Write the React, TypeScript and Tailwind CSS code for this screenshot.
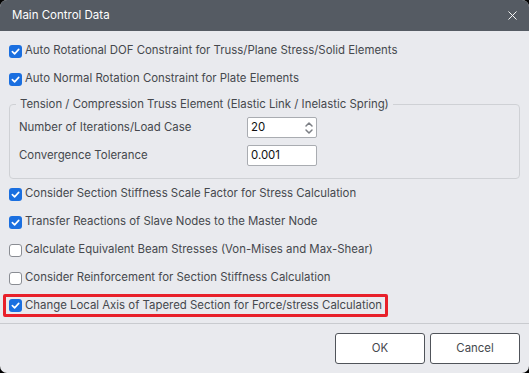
import { X } from 'lucide-react'

function Check({ checked }: { checked: boolean }) {
  if (checked) {
    return (
      <span className="w-[13px] h-[13px] rounded-[3px] bg-[#1a6fe0] flex items-center justify-center shrink-0">
        <svg width="9" height="9" viewBox="0 0 10 10" fill="none">
          <path d="M1.5 5.2 L4 7.6 L8.6 2.6" stroke="white" strokeWidth="1.8" strokeLinecap="round" strokeLinejoin="round" />
        </svg>
      </span>
    )
  }
  return <span className="w-[13px] h-[13px] rounded-[3px] bg-white border border-[#8a8d93] shrink-0" />
}

function CheckRow({ label, checked }: { label: string; checked: boolean }) {
  return (
    <div className="h-[28px] flex items-center gap-[3px] pl-[9px] whitespace-nowrap">
      <Check checked={checked} />
      <span>{label}</span>
    </div>
  )
}

export default function App() {
  return (
    <div className="w-[529px] h-[373px] bg-black">
      <div
        className="w-[529px] h-[373px] rounded-[7px] overflow-hidden bg-[#e9eaee] flex flex-col text-[#45484d] text-[11.4px]"
        style={{ fontFamily: 'Inter, "Noto Sans", sans-serif' }}
      >
        <div className="h-[31px] bg-[#555b63] flex items-center justify-between pl-[12px] pr-[9px] text-white text-[11.5px]">
          <span>Main Control Data</span>
          <X size={15} strokeWidth={1.5} />
        </div>
        <div className="pt-[6px]">
          <CheckRow checked label="Auto Rotational DOF Constraint for Truss/Plane Stress/Solid Elements" />
          <CheckRow checked label="Auto Normal Rotation Constraint for Plate Elements" />
        </div>
        <div className="mx-[9px] mt-[11px] h-[75px] border border-[#cfd1d5] rounded-[4px] relative">
          <span className="absolute -top-[9px] left-[6px] px-[4px] bg-[#e9eaee] leading-[16px] whitespace-nowrap">
            Tension / Compression Truss Element (Elastic Link / Inelastic Spring)
          </span>
          <div className="pt-[12px] pl-[9px] flex flex-col gap-[7px]">
            <div className="flex items-center h-[21px]">
              <span className="w-[228px]">Number of Iterations/Load Case</span>
              <div className="w-[70px] h-[21px] bg-white border border-[#a9acb1] rounded-[2px] flex items-center justify-between pl-[3px] pr-[2px] text-[#111]">
                <span>20</span>
                <svg width="10" height="16" viewBox="0 0 10 16" fill="none">
                  <path d="M2 6 L5 3 L8 6" stroke="#7c7f85" strokeWidth="1.5" strokeLinecap="round" strokeLinejoin="round" />
                  <path d="M2 10 L5 13 L8 10" stroke="#7c7f85" strokeWidth="1.5" strokeLinecap="round" strokeLinejoin="round" />
                </svg>
              </div>
            </div>
            <div className="flex items-center h-[21px]">
              <span className="w-[228px]">Convergence Tolerance</span>
              <div className="w-[70px] h-[21px] bg-white border border-[#a9acb1] rounded-[2px] flex items-center pl-[3px] text-[#111]">
                0.001
              </div>
            </div>
          </div>
        </div>
        <div className="pt-[1px]">
          <CheckRow checked label="Consider Section Stiffness Scale Factor for Stress Calculation" />
          <CheckRow checked label="Transfer Reactions of Slave Nodes to the Master Node" />
          <CheckRow checked={false} label="Calculate Equivalent Beam Stresses (Von-Mises and Max-Shear)" />
          <CheckRow checked={false} label="Consider Reinforcement for Section Stiffness Calculation" />
        </div>
        <div className="mt-[2px] ml-[3px] w-[385px] h-[23px] border-[3px] border-[#e8202a] rounded-[2px] flex items-center gap-[3px] pl-[3px] whitespace-nowrap">
          <Check checked />
          <span>Change Local Axis of Tapered Section for Force/stress Calculation</span>
        </div>
        <div className="mt-[6px] border-t border-[#c9cbcf]" />
        <div className="flex justify-end gap-[5px] pr-[9px] pt-[9px]">
          <button className="w-[90px] h-[31px] bg-white border border-[#50545a] rounded-[3px]">OK</button>
          <button className="w-[90px] h-[31px] bg-white border border-[#50545a] rounded-[3px]">Cancel</button>
        </div>
      </div>
    </div>
  )
}
